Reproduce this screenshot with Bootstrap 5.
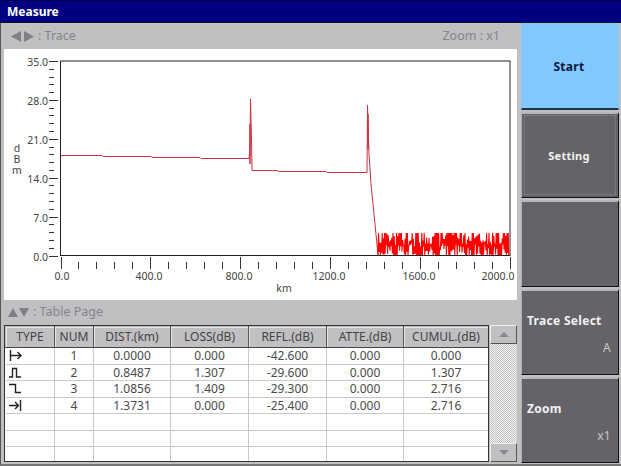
<!DOCTYPE html>
<html lang="en">
<head>
    <meta charset="UTF-8">
    <title>Measure</title>
    <link href="https://cdn.jsdelivr.net/npm/bootstrap@5.3.0/dist/css/bootstrap.min.css" rel="stylesheet">
    <style>
        html, body { height: 466px; overflow: hidden; }
        body { font-family: "Noto Sans", "Liberation Sans", sans-serif; font-size: 11px; background: #c0bfc2; }
        .screen { width: 621px; height: 466px; border-left: 1px solid #555; border-bottom: 2px solid #777; }
        .title-bar { height: 23px; background: #000080; border-top: 1px solid #00004a; border-bottom: 1px solid #111; color: #fff; font-weight: 700; font-size: 12px; padding-left: 7px; line-height: 22px; margin-left: -1px; }
        .left-pane { width: 517px; padding-left: 3px; }
        .pane-head { color: #85858a; font-size: 12.5px; padding: 0 18px 0 7px; }
        .trace-head { height: 26px; }
        .page-head { height: 25px; padding-left: 4px; }
        .plot-box { width: 513px; height: 251px; background: #fff; }
        .plot-box svg { display: block; }
        .plot-box text { font-family: "Noto Sans", "Liberation Sans", sans-serif; font-size: 10.5px; fill: #444; }
        .plot-box .axis-unit { writing-mode: vertical-rl; text-orientation: upright; letter-spacing: -3px; }
        .table-wrap { height: 137px; }
        .event-box { width: 485px; height: 137px; border: 1px solid #333; background: #fff; overflow: hidden; }
        .event-table { table-layout: fixed; width: 484px; border-collapse: collapse; margin: 0; color: #4a4a4a; font-size: 12px; }
        .event-table th { height: 21px; background: #c0bfc2; font-weight: 400; text-align: center; padding: 0; border: 1px solid #c0bfc2; border-right: 1px solid #555; border-bottom: 1px solid #444; box-shadow: inset 1px 1px 0 #e4e4e4; color: #444; }
        .event-table td { height: 16.5px; line-height: 14px; padding: 1px 0 0; text-align: center; border-right: 1px solid #c8c8c8; border-bottom: 1px solid #c8c8c8; background: #fff; color: #4a4a4a; }
        .event-table td:first-child { text-align: left; padding: 0 0 0 3px; }
        .event-table td svg { display: block; }
        .scroll-box { width: 27px; height: 137px; margin-left: 1px; background: repeating-conic-gradient(#c0bfc2 0 25%, #f4f4f4 0 50%) 0 0 / 2px 2px; }
        .scroll-btn { height: 19px; background: #c0bfc2; border: 1px solid #555; border-top-color: #eee; border-left-color: #eee; }
        .side-pane { width: 98px; margin-left: 3px; gap: 2px; padding-bottom: 1px; }
        .soft-key { flex: 1 1 0; min-height: 0; background: #656367; color: #f2f2f2; font-weight: 700; font-size: 12px; border-radius: 0; border: 1px solid #111; border-top: 2px solid #b8b8b8; border-left-color: #b0b0b0; padding: 0 7px 0 5px; letter-spacing: .3px; }
        .soft-key.key-start { background: #80c8ff; color: #0a1a40; border-top-color: #80c8ff; border-left-color: #80c8ff; border-right-color: #80c8ff; border-bottom: 2px solid #234; }
        .soft-key.key-setting { font-size: 11px; outline: 1px dotted #8c8c8c; outline-offset: -4px; }
        .soft-value { color: #c8c8c8; font-weight: 400; }
        .key-title { margin-top: 5px; }
        .key-value { margin-top: 9px; }
    </style>
</head>
<body>
    <div class="screen d-flex flex-column">
        <div class="title-bar">Measure</div>
        <div class="d-flex flex-grow-1">
            <!-- Trace and table -->
            <div class="left-pane d-flex flex-column">
                <div class="pane-head trace-head d-flex align-items-center justify-content-between">
                    <span class="d-flex align-items-center gap-1">
                        <svg width="23" height="11" viewBox="0 0 23 11"><path d="M10 0v11L0 5.500zM13 0v11l10-5.500z" fill="#808084"/></svg>
                        <span>: Trace</span>
                    </span>
                    <span>Zoom : x1</span>
                </div>
                <div class="plot-box">
                    <svg id="plot" width="513" height="251" viewBox="4 50 513 251"></svg>
                </div>
                <div class="pane-head page-head d-flex align-items-center gap-1">
                    <svg width="21" height="9" viewBox="0 0 21 9"><path d="M0 9L5 0l5 9zM11 0h10l-5 9z" fill="#808084"/></svg>
                    <span>: Table Page</span>
                </div>
                <div class="table-wrap d-flex">
                    <div class="event-box">
                        <table class="event-table">
                            <colgroup><col style="width:49px"><col style="width:39px"><col style="width:77px"><col style="width:78px"><col style="width:78px"><col style="width:77px"><col></colgroup>
                            <thead><tr><th>TYPE</th><th>NUM</th><th>DIST.(km)</th><th>LOSS(dB)</th><th>REFL.(dB)</th><th>ATTE.(dB)</th><th>CUMUL.(dB)</th></tr></thead>
                            <tbody id="rows"></tbody>
                        </table>
                    </div>
                    <div class="scroll-box d-flex flex-column justify-content-between">
                        <div class="scroll-btn d-flex align-items-center justify-content-center"><svg width="10" height="5"><path d="M0 5L5 0l5 5z" fill="#8a8a8e"/></svg></div>
                        <div class="scroll-btn d-flex align-items-center justify-content-center"><svg width="10" height="5"><path d="M0 0h10L5 5z" fill="#8a8a8e"/></svg></div>
                    </div>
                </div>
            </div>

            <!-- Soft keys -->
            <div class="side-pane d-flex flex-column">
                <button class="btn soft-key key-start">Start</button>
                <button class="btn soft-key key-setting">Setting</button>
                <button class="btn soft-key"></button>
                <button class="btn soft-key d-flex flex-column justify-content-center align-items-start">
                    <span class="key-title">Trace Select</span>
                    <span class="soft-value align-self-end key-value">A</span>
                </button>
                <button class="btn soft-key d-flex flex-column justify-content-center align-items-start">
                    <span class="key-title">Zoom</span>
                    <span class="soft-value align-self-end key-value">x1</span>
                </button>
            </div>
        </div>
    </div>

    <script src="https://cdn.jsdelivr.net/npm/bootstrap@5.3.0/dist/js/bootstrap.bundle.min.js"></script>
    <script>
        // Type icons
        const icons = {
            start: '<path d="M1.500 0v11M2 5.500h10M8.500 2l3.500 3.500L8.500 9"/>',
            pulse: '<path d="M0 10h3.500V1.500h4V10H12"/>',
            drop: '<path d="M0 1.500h6.500V9.500H12"/>',
            end: '<path d="M0 5.500h9M6 2l3.500 3.500L6 9M11.500 0v11"/>'
        };
        const rows = [
            ['start', 1, '0.0000', '0.000', '-42.600', '0.000', '0.000'],
            ['pulse', 2, '0.8487', '1.307', '-29.600', '0.000', '1.307'],
            ['drop', 3, '1.0856', '1.409', '-29.300', '0.000', '2.716'],
            ['end', 4, '1.3731', '0.000', '-25.400', '0.000', '2.716'],
            [], [], []
        ];
        document.getElementById('rows').innerHTML = rows.map(r => {
            if (!r.length) return '<tr><td></td><td></td><td></td><td></td><td></td><td></td><td></td></tr>';
            const icon = `<svg width="13" height="11" fill="none" stroke="#222" stroke-width="1.400">${icons[r[0]]}</svg>`;
            return `<tr><td>${icon}</td>` + r.slice(1).map(v => `<td>${v}</td>`).join('') + '</tr>';
        }).join('');

        // Plot, drawn in screen coordinates
        const left = 60.5, right = 510, top_ = 62, bottom = 256.5;
        let svg = '';
        const line = (x1, y1, x2, y2, c = '#333') => `<line x1="${x1}" y1="${y1}" x2="${x2}" y2="${y2}" stroke="${c}"/>`;

        for (let i = 0; i <= 25; i++) {
            const y = Math.round(bottom - i * (bottom - top_) / 25) + 0.5;
            svg += i % 5 === 0 ? line(49, y, 58, y) : line(49, y, 54, y);
            if (i % 5 === 0) svg += `<text x="48" y="${y + 4}" text-anchor="end">${(i * 1.4).toFixed(1)}</text>`;
        }
        for (let i = 0; i <= 25; i++) {
            const x = Math.round(left + i * (right - left) / 25) + 0.5;
            svg += i % 5 === 0 ? line(x, 258, x, 270) : line(x, 263, x, 270);
        }
        [[62, '0.0'], [149, '400.0'], [239, '800.0'], [329, '1200.0'], [419, '1600.0'], [498, '2000.0']].forEach(([x, t]) => {
            svg += `<text x="${x}" y="281" text-anchor="middle">${t}</text>`;
        });
        svg += '<text x="284" y="293" text-anchor="middle">km</text>';
        svg += '<text class="axis-unit" x="17" y="142">dBm</text>';
        svg += `<rect x="${left}" y="${top_}" width="${right - left}" height="${bottom - top_}" fill="none" stroke="#222"/>`;

        // Trace
        svg += '<polyline fill="none" stroke="#c8323c" points="61,156.500 102,156.500 103,157.500 151,157.500 152,158.500 200,158.500 201,159.500 249,159.500 250,150 250.500,100 251.500,140 252,171.500 277,171.500 279,172.500 326,172.500 327,173.500 367,173.500 367.500,106 368.500,140 369,155 371,185 374,215 378,256"/>';
        svg += '<path d="M250 125V165M368 115V150" stroke="#c8323c" stroke-width="1.500"/>';

        // Noise floor
        let seed = 7, pts = '378,256';
        const rnd = () => (seed = (seed * 16807) % 2147483647) / 2147483647;
        for (let x = 378; x <= 509; x += 0.6) {
            const hi = rnd() < 0.4 ? 234 : 234 + rnd() * 14;
            const lo = rnd() < 0.4 ? 256 : 244 + rnd() * 12;
            pts += ` ${x.toFixed(1)},${Math.round(x / 0.6) % 2 ? hi : lo}`;
        }
        svg += `<polyline fill="none" stroke="#f00" stroke-width="1.100" points="${pts}"/>`;
        document.getElementById('plot').innerHTML = svg;
    </script>
</body>
</html>
